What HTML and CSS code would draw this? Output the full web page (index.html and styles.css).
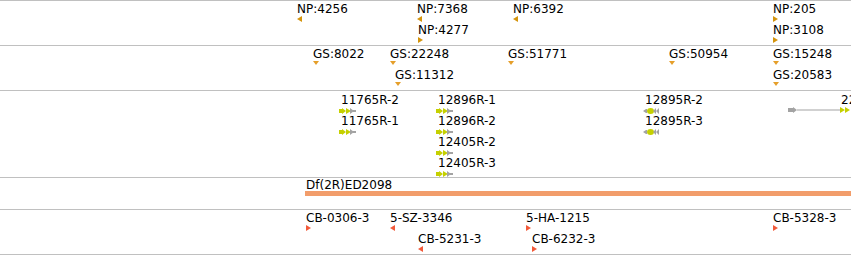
FILE: index.html
```html
<!DOCTYPE html>
<html lang="en">
<head>
    <meta charset="UTF-8">
    <title>Tracks</title>
    <link rel="stylesheet" href="styles.css">
</head>
<body>
    <div class="tracks">
        <!-- NP track -->
        <div class="track t-np">
            <div class="feat r1" style="left:297px"><span class="lbl">NP:4256</span><i class="mk mk-l gold"></i></div>
            <div class="feat r1" style="left:417px"><span class="lbl">NP:7368</span><i class="mk mk-l gold"></i></div>
            <div class="feat r2" style="left:418px"><span class="lbl">NP:4277</span><i class="mk mk-r gold"></i></div>
            <div class="feat r1" style="left:513px"><span class="lbl">NP:6392</span><i class="mk mk-l gold"></i></div>
            <div class="feat r1" style="left:773px"><span class="lbl">NP:205</span><i class="mk mk-r gold"></i></div>
            <div class="feat r2" style="left:773px"><span class="lbl">NP:3108</span><i class="mk mk-r gold"></i></div>
        </div>

        <!-- GS track -->
        <div class="track t-gs">
            <div class="feat r1" style="left:313px"><span class="lbl">GS:8022</span><i class="mk mk-d amber"></i></div>
            <div class="feat r1" style="left:390px"><span class="lbl">GS:22248</span><i class="mk mk-d amber"></i></div>
            <div class="feat r2" style="left:395px"><span class="lbl">GS:11312</span><i class="mk mk-d amber"></i></div>
            <div class="feat r1" style="left:508px"><span class="lbl">GS:51771</span><i class="mk mk-d amber"></i></div>
            <div class="feat r1" style="left:669px"><span class="lbl">GS:50954</span><i class="mk mk-d amber"></i></div>
            <div class="feat r1" style="left:773px"><span class="lbl">GS:15248</span><i class="mk mk-d amber"></i></div>
            <div class="feat r2" style="left:773px"><span class="lbl">GS:20583</span><i class="mk mk-d amber"></i></div>
        </div>

        <!-- RNAi track -->
        <div class="track t-rnai">
            <div class="feat q1" style="left:339px"><span class="lbl lbl-in">11765R-2</span>
                <svg class="amp" width="18" height="6" viewBox="0 0 18 6"><polygon class="y" points="0,1 3,1 3,0 7,3 7,0 12,3 7,6 7,3 3,6 3,5 0,5"/><polygon class="g" points="11,0 15,3 11,6"/><rect class="g" x="14" y="2" width="3" height="2"/></svg>
            </div>
            <div class="feat q2" style="left:339px"><span class="lbl lbl-in">11765R-1</span>
                <svg class="amp" width="18" height="6" viewBox="0 0 18 6"><polygon class="y" points="0,1 3,1 3,0 7,3 7,0 12,3 7,6 7,3 3,6 3,5 0,5"/><polygon class="g" points="11,0 15,3 11,6"/><rect class="g" x="14" y="2" width="3" height="2"/></svg>
            </div>
            <div class="feat q1" style="left:436px"><span class="lbl lbl-in">12896R-1</span>
                <svg class="amp" width="18" height="6" viewBox="0 0 18 6"><polygon class="y" points="0,1 3,1 3,0 7,3 7,0 12,3 7,6 7,3 3,6 3,5 0,5"/><polygon class="g" points="11,0 15,3 11,6"/><rect class="g" x="14" y="2" width="3" height="2"/></svg>
            </div>
            <div class="feat q2" style="left:436px"><span class="lbl lbl-in">12896R-2</span>
                <svg class="amp" width="18" height="6" viewBox="0 0 18 6"><polygon class="y" points="0,1 3,1 3,0 7,3 7,0 12,3 7,6 7,3 3,6 3,5 0,5"/><polygon class="g" points="11,0 15,3 11,6"/><rect class="g" x="14" y="2" width="3" height="2"/></svg>
            </div>
            <div class="feat q3" style="left:436px"><span class="lbl lbl-in">12405R-2</span>
                <svg class="amp" width="18" height="6" viewBox="0 0 18 6"><polygon class="y" points="0,1 3,1 3,0 7,3 7,0 12,3 7,6 7,3 3,6 3,5 0,5"/><polygon class="g" points="11,0 15,3 11,6"/><rect class="g" x="14" y="2" width="3" height="2"/></svg>
            </div>
            <div class="feat q4" style="left:436px"><span class="lbl lbl-in">12405R-3</span>
                <svg class="amp" width="18" height="6" viewBox="0 0 18 6"><polygon class="y" points="0,1 3,1 3,0 7,3 7,0 12,3 7,6 7,3 3,6 3,5 0,5"/><polygon class="g" points="11,0 15,3 11,6"/><rect class="g" x="14" y="2" width="3" height="2"/></svg>
            </div>
            <div class="feat q1" style="left:643px"><span class="lbl lbl-in">12895R-2</span>
                <svg class="amp" width="17" height="6" viewBox="0 0 17 6"><polygon class="g" points="0,3 3,1 4,1 4,5 3,5"/><ellipse class="y" cx="7.5" cy="3" rx="3.5" ry="3"/><polygon class="g" points="10,3 13,0 13,3 16,0 16,6 13,3 13,6"/></svg>
            </div>
            <div class="feat q2" style="left:643px"><span class="lbl lbl-in">12895R-3</span>
                <svg class="amp" width="17" height="6" viewBox="0 0 17 6"><polygon class="g" points="0,3 3,1 4,1 4,5 3,5"/><ellipse class="y" cx="7.5" cy="3" rx="3.5" ry="3"/><polygon class="g" points="10,3 13,0 13,3 16,0 16,6 13,3 13,6"/></svg>
            </div>
            <div class="feat q1" style="left:839px"><span class="lbl lbl-in">22390R-1</span></div>
            <svg class="span-amp" width="70" height="6" viewBox="0 0 70 6">
                <polygon class="g" points="0,1 5,1 5,0 9,3 5,6 5,5 0,5"/>
                <rect class="g" x="9" y="2.5" width="43" height="1"/>
                <polygon class="y" points="52,0 57,3 57,0 62,3 57,6 57,3 52,6"/>
            </svg>
        </div>

        <!-- Deficiency track -->
        <div class="track t-df">
            <div class="feat df" style="left:305px"><span class="lbl lbl-df">Df(2R)ED2098</span><span class="bar"></span></div>
        </div>

        <!-- CB track -->
        <div class="track t-cb">
            <div class="feat r1" style="left:306px"><span class="lbl">CB-0306-3</span><i class="mk mk-r red"></i></div>
            <div class="feat r1" style="left:390px"><span class="lbl">5-SZ-3346</span><i class="mk mk-l red"></i></div>
            <div class="feat r2" style="left:418px"><span class="lbl">CB-5231-3</span><i class="mk mk-l red"></i></div>
            <div class="feat r1" style="left:526px"><span class="lbl">5-HA-1215</span><i class="mk mk-r red"></i></div>
            <div class="feat r2" style="left:532px"><span class="lbl">CB-6232-3</span><i class="mk mk-r red"></i></div>
            <div class="feat r1" style="left:773px"><span class="lbl">CB-5328-3</span><i class="mk mk-r red"></i></div>
        </div>
    </div>
</body>
</html>
```

FILE: styles.css
```css
body {
    margin: 0;
    background-color: #fff;
    width: 851px;
    overflow: hidden;
    font-family: "DejaVu Sans", "Liberation Sans", sans-serif;
    font-size: 12px;
    color: #000;
}

div.tracks {
    border-top: 1px solid #c0c0c0;
}

div.track {
    position: relative;
    overflow: hidden;
    border-bottom: 1px solid #c0c0c0;
}

div.t-np, div.t-gs, div.t-cb { height: 44px; }
div.t-rnai { height: 86px; }
div.t-df { height: 31px; }

/* features sit at their position on the track */
div.feat {
    position: absolute;
    display: flex;
    flex-direction: column;
    align-items: flex-start;
}

div.r1 { top: 1px; }
div.r2 { top: 22px; }
div.q1 { top: 2px; }
div.q2 { top: 23px; }
div.q3 { top: 44px; }
div.q4 { top: 65px; }
div.df { top: 2px; width: 560px; }

span.lbl {
    display: block;
    line-height: 14px;
    white-space: nowrap;
}

span.lbl-in { margin-left: 2px; }

span.lbl-df {
    line-height: 11px;
    margin-left: 1px;
}

span.bar {
    display: block;
    width: 100%;
    height: 5px;
    background-color: #f29d6b;
}

/* small strand markers */
i.mk {
    display: block;
    width: 0;
    height: 0;
}

i.mk-l {
    border-top: 3px solid transparent;
    border-bottom: 3px solid transparent;
    border-right: 5px solid;
}

i.mk-r {
    border-top: 3px solid transparent;
    border-bottom: 3px solid transparent;
    border-left: 5px solid;
}

i.mk-d {
    border-left: 3px solid transparent;
    border-right: 3px solid transparent;
    border-top: 4px solid;
}

i.gold { color: #d4940c; }
i.amber { color: #e59f2a; }
i.red { color: #f25a3a; }

svg.amp {
    display: block;
    margin-top: 1px;
}

svg.span-amp {
    position: absolute;
    left: 788px;
    top: 16px;
}

.y { fill: #c5d000; }
.g { fill: #a3a3a3; }
```
